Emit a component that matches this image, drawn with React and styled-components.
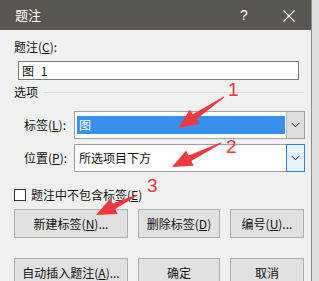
import React from 'react';
import styled, { createGlobalStyle, css } from 'styled-components';

const GlobalStyle = createGlobalStyle`
  html, body {
    margin: 0;
    padding: 0;
    background: #dedede;
  }
  body {
    font-family: "Noto Sans CJK SC", "Liberation Sans", sans-serif;
    font-size: 12px;
    color: #111;
  }
`;

const arrows = [
  { from: [224, 97], to: [178, 128] },
  { from: [221, 143], to: [172, 167] },
  { from: [137, 195], to: [96, 215] },
];

const marks = [
  { text: '1', x: 228, y: 79 },
  { text: '2', x: 226, y: 136 },
  { text: '3', x: 147, y: 175 },
];

// fat red annotation arrow: thin tail widening into a triangular head
const arrowPoints = ({ from, to }) => {
  const dx = to[0] - from[0];
  const dy = to[1] - from[1];
  const len = Math.hypot(dx, dy);
  const ux = dx / len;
  const uy = dy / len;
  const nx = -uy;
  const ny = ux;
  const head = 20;
  const bx = to[0] - ux * head;
  const by = to[1] - uy * head;
  const p = (x, y, w) => `${(x + nx * w).toFixed(1)},${(y + ny * w).toFixed(1)}`;
  return [
    p(from[0], from[1], 0.6),
    p(bx, by, 3),
    p(bx, by, 8.5),
    `${to[0]},${to[1]}`,
    p(bx, by, -8.5),
    p(bx, by, -3),
    p(from[0], from[1], -0.6),
  ].join(' ');
};

const Chevron = () => (
  <svg width="9" height="6" viewBox="0 0 9 6">
    <path d="M0.5 0.8 L4.5 4.8 L8.5 0.8" fill="none" stroke="#222" strokeWidth="1" />
  </svg>
);

const CloseIcon = () => (
  <svg width="12" height="12" viewBox="0 0 12 12">
    <path d="M0.5 0.5 L11.5 11.5 M11.5 0.5 L0.5 11.5" stroke="#fff" strokeWidth="1.2" />
  </svg>
);

const App = () => {
  return (
    <>
      <GlobalStyle />
      <Window>
        <TitleBar>
          <Title>题注</Title>
          <TitleButtons>
            <Help>?</Help>
            <Close>
              <CloseIcon />
            </Close>
          </TitleButtons>
        </TitleBar>

        <Body>
          <CaptionLabel>
            题注(<u>C</u>):
          </CaptionLabel>
          <TextInput>图 1</TextInput>

          <GroupHeader>
            <span>选项</span>
            <GroupLine />
          </GroupHeader>

          <FieldRow $top={11}>
            <FieldLabel>
              标签(<u>L</u>):
            </FieldLabel>
            <Combo>
              <ComboValue $selected>图</ComboValue>
              <DropButton>
                <Chevron />
              </DropButton>
            </Combo>
          </FieldRow>

          <FieldRow $top={5}>
            <FieldLabel>
              位置(<u>P</u>):
            </FieldLabel>
            <Combo>
              <ComboValue>所选项目下方</ComboValue>
              <DropButton $hover>
                <Chevron />
              </DropButton>
            </Combo>
          </FieldRow>

          <CheckRow>
            <CheckBox />
            <span>
              题注中不包含标签(<u>E</u>)
            </span>
          </CheckRow>

          <ButtonGrid $top={6}>
            <Button>
              新建标签(<u>N</u>)...
            </Button>
            <Button>
              删除标签(<u>D</u>)
            </Button>
            <Button>
              编号(<u>U</u>)...
            </Button>
          </ButtonGrid>

          <ButtonGrid $top={20}>
            <Button>
              自动插入题注(<u>A</u>)...
            </Button>
            <Button>确定</Button>
            <Button>取消</Button>
          </ButtonGrid>
        </Body>

        <Annotations width="311" height="281" viewBox="0 0 311 281">
          {arrows.map((a, i) => (
            <polygon key={i} points={arrowPoints(a)} fill="#ec3a3f" />
          ))}
        </Annotations>
        {marks.map((m) => (
          <Mark key={m.text} style={{ left: m.x, top: m.y }}>
            {m.text}
          </Mark>
        ))}
      </Window>
    </>
  );
};

export default App;

const Window = styled.div`
  position: relative;
  width: 311px;
  height: 281px;
  overflow: hidden;
  background: #f0f0f0;
  border-right: 1px solid #8c8c8c;
`;

const TitleBar = styled.div`
  display: flex;
  align-items: center;
  justify-content: space-between;
  height: 30px;
  padding-left: 15px;
  background: #5a5652;
  color: #fff;
`;

const Title = styled.div`
  font-size: 13px;
  line-height: 16px;
`;

const TitleButtons = styled.div`
  display: flex;
  align-items: center;
  height: 100%;
`;

const Help = styled.div`
  width: 46px;
  text-align: left;
  font-family: "Liberation Sans", sans-serif;
  font-size: 14px;
  padding-left: 3px;
  box-sizing: border-box;
`;

const Close = styled.div`
  display: flex;
  align-items: center;
  justify-content: flex-start;
  width: 28px;
  padding-top: 1px;
`;

const Body = styled.div`
  padding-left: 14px;
  line-height: 16px;
`;

const CaptionLabel = styled.div`
  margin-top: 9px;
`;

const TextInput = styled.div`
  box-sizing: border-box;
  width: 281px;
  height: 19px;
  margin: 6px 0 0 4px;
  padding-left: 3px;
  background: #fff;
  border: 1px solid #7a7a7a;
  line-height: 17px;
  word-spacing: 4px;
`;

const GroupHeader = styled.div`
  display: flex;
  align-items: center;
  gap: 6px;
  margin-top: 4px;
  width: 290px;
`;

const GroupLine = styled.div`
  flex: 1;
  height: 1px;
  background: #d8d8d8;
`;

const FieldRow = styled.div`
  display: flex;
  align-items: center;
  margin-top: ${({ $top }) => $top}px;
`;

const FieldLabel = styled.div`
  width: 50px;
  padding-left: 10px;
`;

const Combo = styled.div`
  box-sizing: border-box;
  display: flex;
  width: 231px;
  height: 28px;
  background: #fff;
  border: 1px solid #a0a0a0;
`;

const ComboValue = styled.div`
  flex: 1;
  margin: 4px 1px 4px 2px;
  padding-left: 2px;
  line-height: 18px;
  ${({ $selected }) =>
    $selected &&
    css`
      background: #3990ea;
      color: #fff;
    `};
`;

const DropButton = styled.div`
  box-sizing: border-box;
  display: flex;
  align-items: center;
  justify-content: center;
  width: 18px;
  background: #dcdcdc;
  border-left: 1px solid #b9b9b9;
  ${({ $hover }) =>
    $hover &&
    css`
      background: #e5f1fb;
      border: 1px solid #3c7fc0;
      margin: -1px -1px -1px 0;
      width: 19px;
    `};
`;

const CheckRow = styled.div`
  display: flex;
  align-items: center;
  gap: 5px;
  margin-top: 15px;
`;

const CheckBox = styled.div`
  box-sizing: border-box;
  width: 12px;
  height: 12px;
  background: #fff;
  border: 1px solid #333;
`;

const ButtonGrid = styled.div`
  display: grid;
  grid-template-columns: 114px 82px 74px;
  gap: 10px;
  margin-top: ${({ $top }) => $top}px;
`;

const Button = styled.div`
  box-sizing: border-box;
  display: flex;
  align-items: center;
  justify-content: center;
  height: 29px;
  background: #e1e1e1;
  border: 1px solid #adadad;
  white-space: nowrap;
`;

const Annotations = styled.svg`
  position: absolute;
  left: 0;
  top: 0;
  pointer-events: none;
`;

const Mark = styled.span`
  position: absolute;
  font-family: "Liberation Sans", sans-serif;
  font-size: 19px;
  line-height: 22px;
  color: #e8363c;
`;
